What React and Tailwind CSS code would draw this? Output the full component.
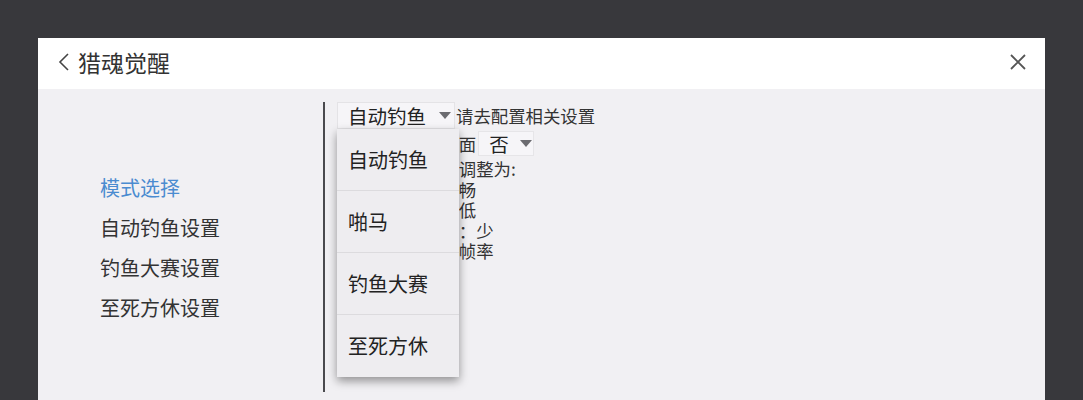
import React from "react";

const font = { fontFamily: '"Noto Sans CJK SC", "Noto Sans", sans-serif' };

function Caret() {
  return (
    <svg width="12" height="7" viewBox="0 0 12 7" className="shrink-0">
      <path d="M0 0 L12 0 L6 7 Z" fill="#6b6b70" />
    </svg>
  );
}

export default function App() {
  const nav = ["模式选择", "自动钓鱼设置", "钓鱼大赛设置", "至死方休设置"];
  const menu = ["自动钓鱼", "啪马", "钓鱼大赛", "至死方休"];
  const lines = [
    "若游戏卡顿建议调整为:",
    "画面质量设为流畅",
    "特效质量设为最低",
    "同屏显示玩家数：少",
    "是否关闭锁定高帧率",
  ];

  return (
    <div className="h-[400px] overflow-hidden bg-[#38383c] px-[38px] pt-[38px]" style={font}>
      <div className="bg-white">
        {/* header */}
        <div className="flex h-[51px] items-center justify-between pb-[3px] pl-[19px] pr-[18px]">
          <div className="flex items-center gap-[7px]">
            <svg width="14" height="20" viewBox="0 0 14 20">
              <polyline points="11,2 3,10 11,18" fill="none" stroke="#444" strokeWidth="1.6" />
            </svg>
            <span className="text-[23px] leading-none text-[#333]">猎魂觉醒</span>
          </div>
          <svg width="18" height="18" viewBox="0 0 18 18">
            <path d="M2 2 L16 16 M16 2 L2 16" stroke="#555" strokeWidth="1.8" />
          </svg>
        </div>

        {/* body */}
        <div className="flex h-[400px] bg-[#f1f0f3]">
          <div className="w-[285px] shrink-0 pl-[62px] pt-[79px]">
            {nav.map((n, i) => (
              <div
                key={n}
                className={`text-[20px] leading-[40px] ${i === 0 ? "text-[#4a8bd0]" : "text-[#333]"}`}
              >
                {n}
              </div>
            ))}
          </div>

          <div className="mt-[13px] h-[290px] w-[2px] shrink-0 bg-[#4a4a4e]" />

          <div className="pl-[12px] pt-[13px] text-[17.4px] text-[#333]">
            <div className="flex items-center">
              <div className="relative">
                <div className="flex h-[27px] w-[118px] items-center gap-[13px] border border-[#e4e3e6] bg-[#f6f5f8] pl-[10px]">
                  <span className="text-[19.5px] leading-none text-[#222]">自动钓鱼</span>
                  <Caret />
                </div>
                <div className="absolute left-0 top-full z-10 w-[122px] bg-[#eeedf0] shadow-[0_4px_9px_rgba(0,0,0,0.4)]">
                  {menu.map((m, i) => (
                    <div
                      key={m}
                      className={`flex h-[62px] items-center pl-[11px] text-[20px] text-[#222] ${i < 3 ? "border-b border-[#dcdbde]" : ""}`}
                    >
                      {m}
                    </div>
                  ))}
                </div>
              </div>
              <span className="ml-px leading-none">请去配置相关设置</span>
            </div>

            <div className="mt-[2px] flex items-center">
              <span className="leading-none">是否隐藏游戏界面</span>
              <div className="ml-[2px] flex h-[25px] w-[56px] items-center gap-[11px] border border-[#e6e5e8] bg-[#f6f5f8] pl-[10px]">
                <span className="text-[19.5px] leading-none text-[#222]">否</span>
                <Caret />
              </div>
            </div>

            <div className="mt-[3px]">
              {lines.map((l) => (
                <div key={l} className="leading-[20.5px]">
                  {l}
                </div>
              ))}
            </div>
          </div>
        </div>
      </div>
    </div>
  );
}
